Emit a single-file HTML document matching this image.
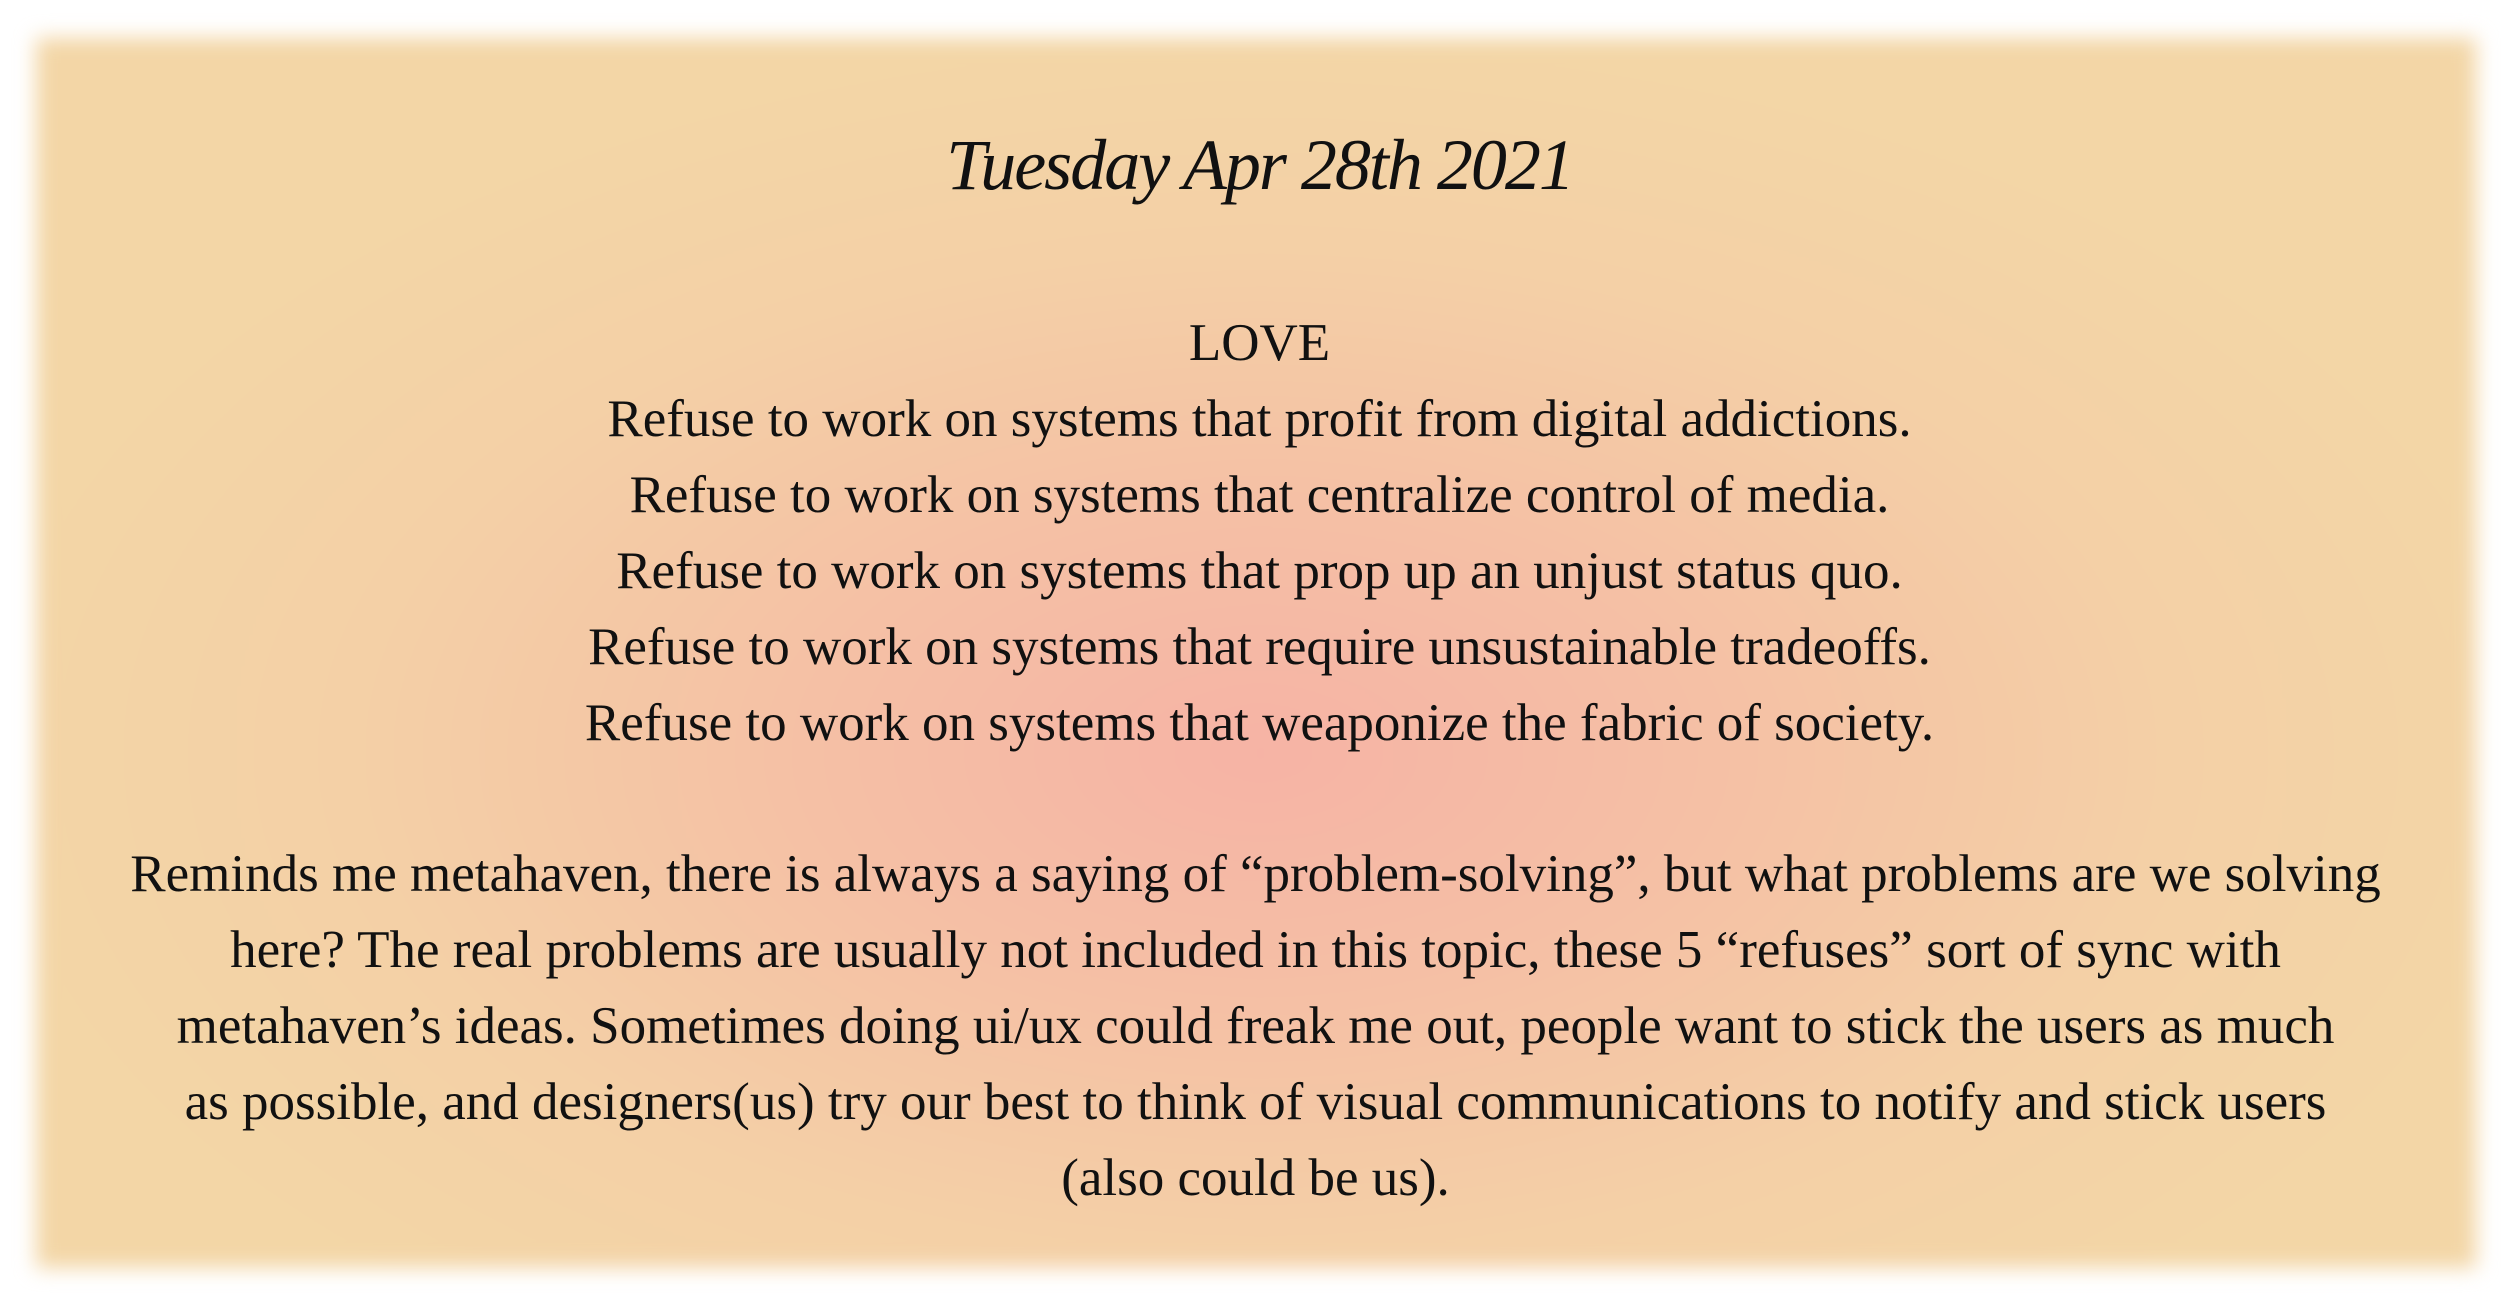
<!DOCTYPE html>
<html><head><meta charset="utf-8">
<style>
html,body{margin:0;padding:0;width:2519px;height:1311px;overflow:hidden;background:#fff;}
.bg{position:absolute;left:36px;top:38px;width:2440px;height:1230px;
background:radial-gradient(ellipse 1300px 720px at 1225px 715px,#f6b3a5 0%,#f5c0a5 35%,#f4d0a6 70%,#f3d6a6 100%);
filter:blur(10px);}
.t{position:absolute;left:0;width:2519px;text-align:center;font-family:"Liberation Serif",serif;color:#111;white-space:nowrap;}
.title{font-style:italic;font-size:72px;top:120px;line-height:90px;letter-spacing:-2px;}
.l{font-size:53px;line-height:76px;}
</style></head><body>
<div class="bg"></div>
<div class="t title">Tuesday Apr 28th 2021</div>
<div class="t l" style="top:305px">LOVE<br>Refuse to work on systems that profit from digital addictions.<br>Refuse to work on systems that centralize control of media.<br>Refuse to work on systems that prop up an unjust status quo.<br>Refuse to work on systems that require unsustainable tradeoffs.<br>Refuse to work on systems that weaponize the fabric of society.</div>
<div class="t l" style="top:836px;left:-4px">Reminds me metahaven, there is always a saying of “problem-solving”, but what problems are we solving<br>here? The real problems are usually not included in this topic, these 5 “refuses” sort of sync with<br>metahaven’s ideas. Sometimes doing ui/ux could freak me out, people want to stick the users as much<br>as possible, and designers(us) try our best to think of visual communications to notify and stick users<br>(also could be us).</div>
</body></html>
